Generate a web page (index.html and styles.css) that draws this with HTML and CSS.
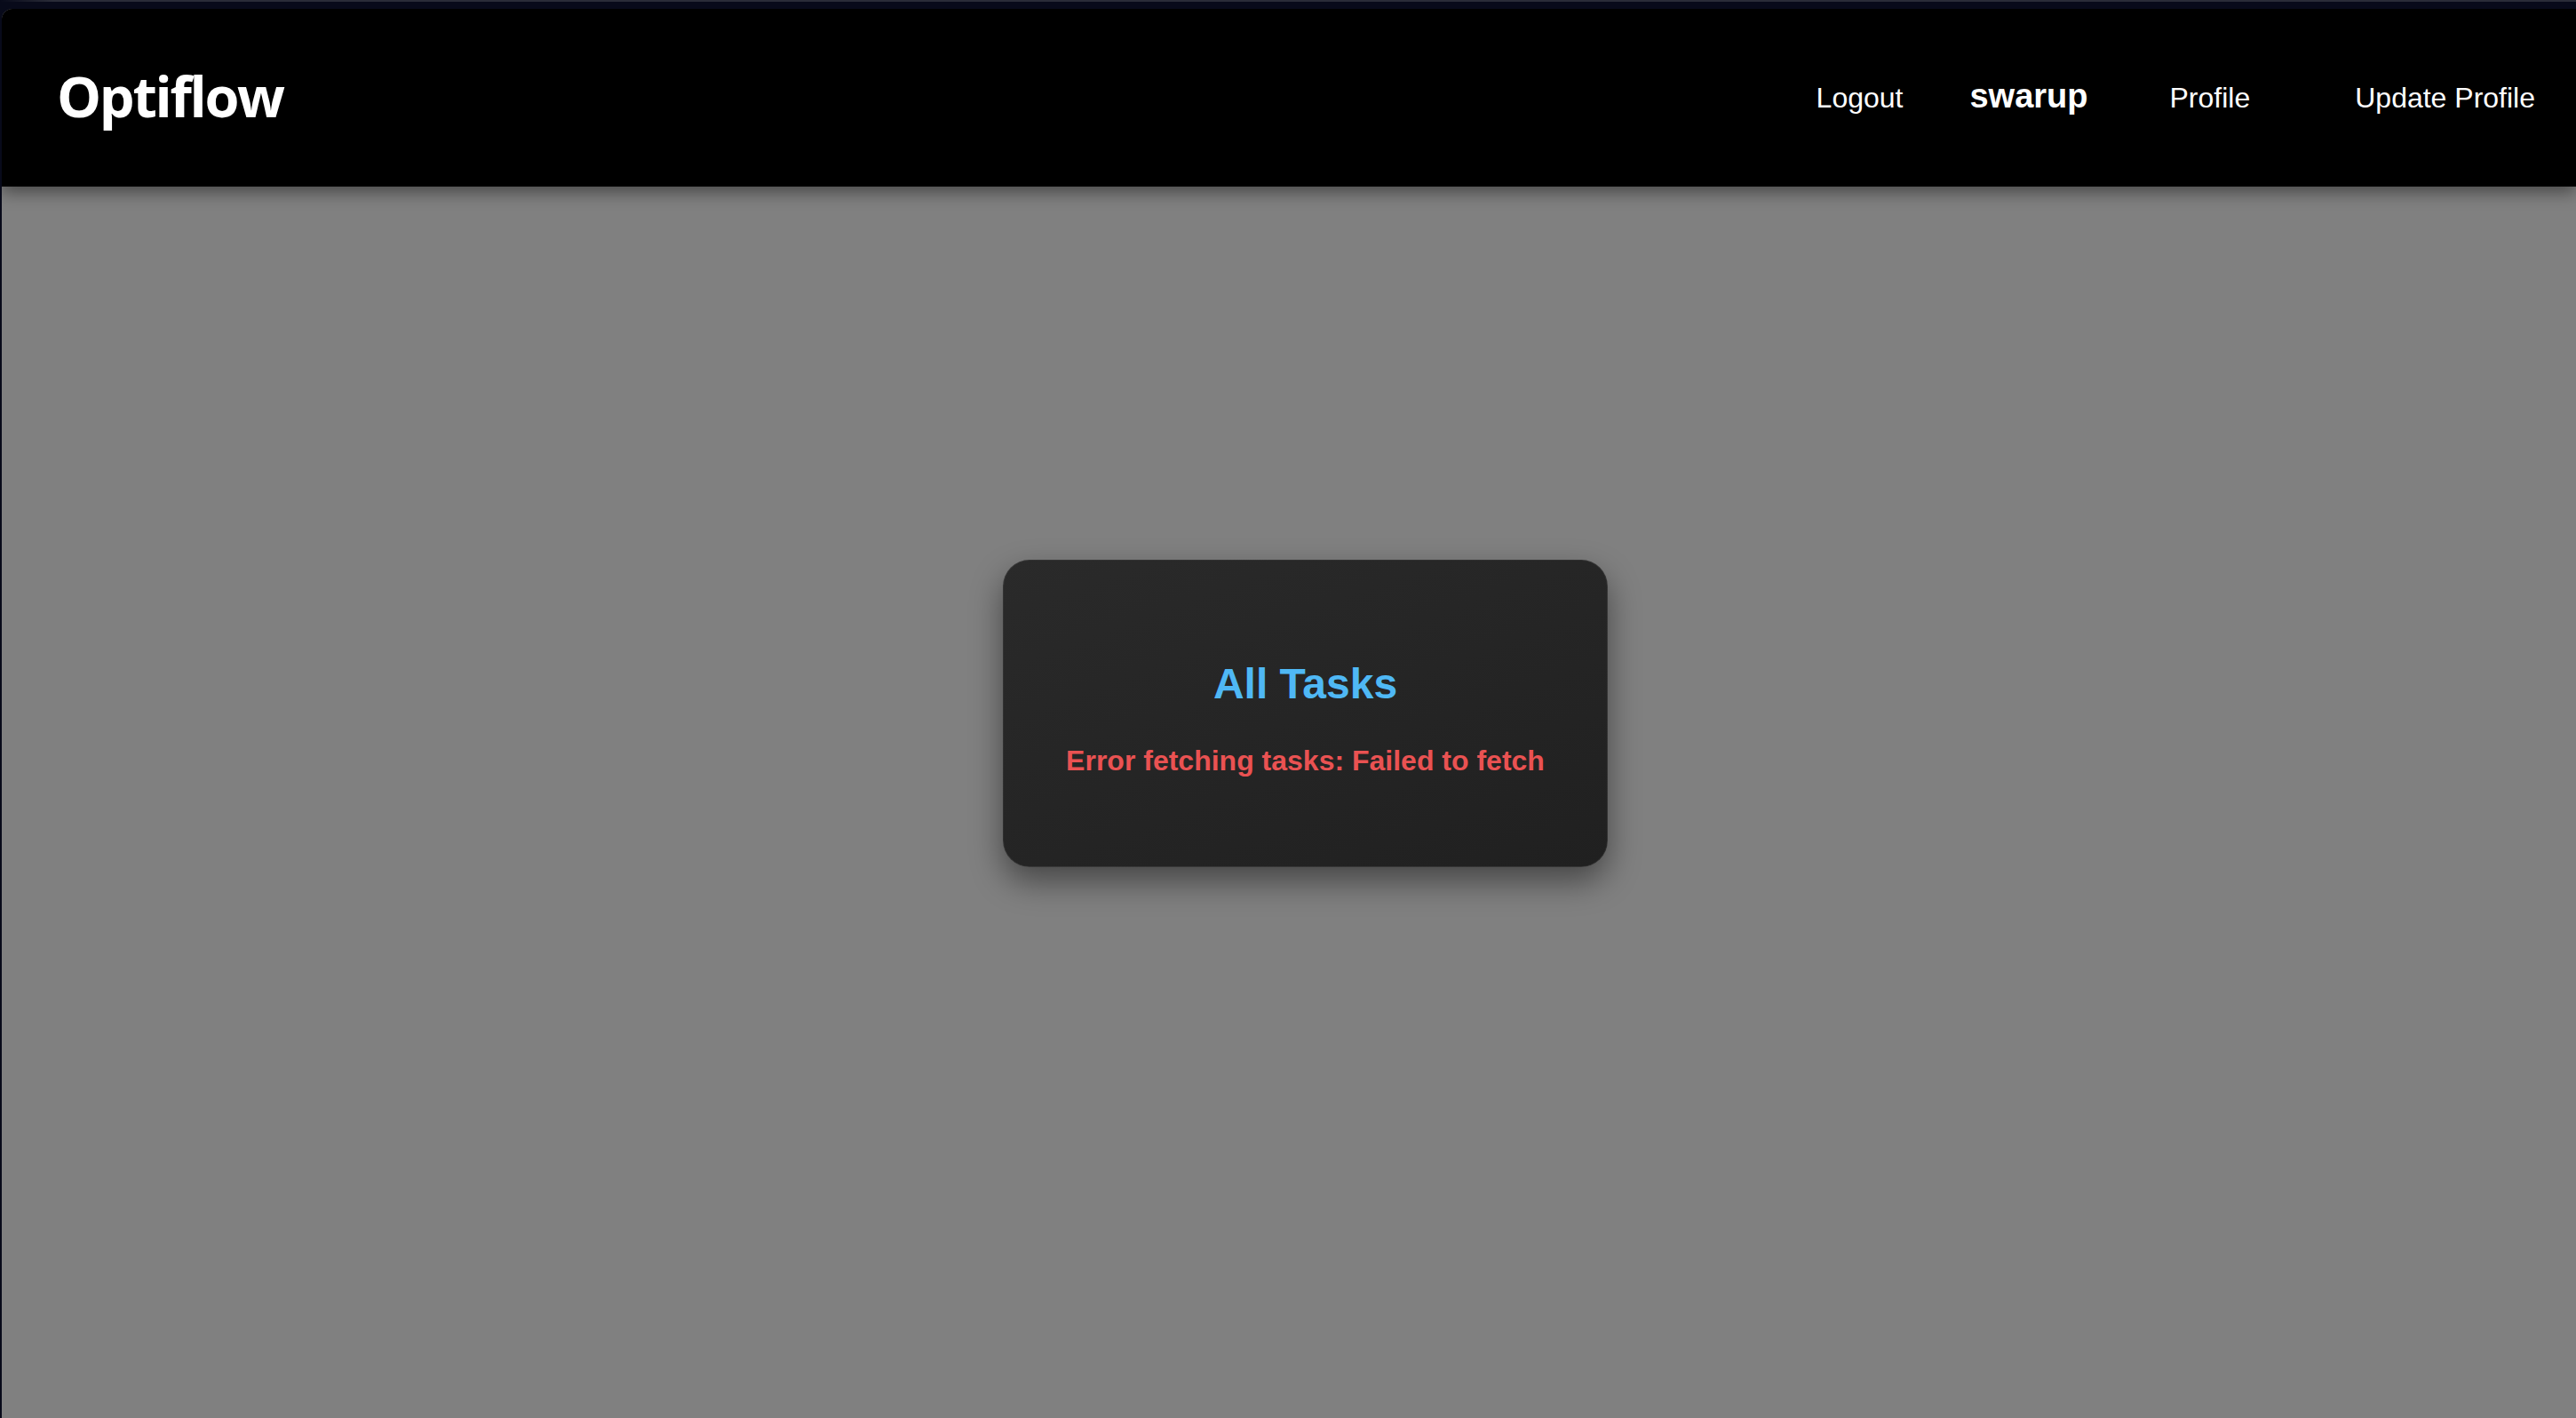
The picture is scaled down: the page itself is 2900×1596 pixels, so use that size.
FILE: index.html
```html
<!DOCTYPE html>
<html lang="en">
<head>
<meta charset="utf-8">
<title>Optiflow</title>
<link rel="stylesheet" href="styles.css">
</head>
<body>
<div class="topline"></div>
<div class="shell">
  <header class="header">
    <div class="logo">Optiflow</div>
    <nav class="nav">
      <a class="nav-link logout">Logout</a>
      <span class="user">swarup</span>
      <a class="nav-link profile">Profile</a>
      <a class="nav-link">Update Profile</a>
    </nav>
  </header>
  <main class="main">
    <section class="card">
      <h2 class="card-title">All Tasks</h2>
      <p class="card-error">Error fetching tasks: Failed to fetch</p>
    </section>
  </main>
</div>
</body>
</html>
```

FILE: styles.css
```css
html, body {
  margin: 0;
  padding: 0;
  height: 100%;
}
body {
  background: #080a1a;
  overflow: hidden;
  font-family: "Liberation Sans", Arial, sans-serif;
}
.topline {
  height: 2px;
  background: linear-gradient(to right, #080a1a, #2a2c38 60px, #2a2c38);
}
.shell {
  margin: 8px 0 0 2px;
  height: calc(100vh - 10px);
  display: flex;
  flex-direction: column;
  border-top-left-radius: 12px;
  overflow: hidden;
  background: #808080;
}
.header {
  position: relative;
  z-index: 2;
  height: 200px;
  flex: none;
  background: #000;
  display: flex;
  align-items: center;
  justify-content: space-between;
  padding: 0 46px 0 62px;
  box-shadow: 0 6px 18px rgba(0, 0, 0, 0.45);
}
.logo {
  font-family: "Open Sans", sans-serif;
  font-weight: 700;
  font-size: 63px;
  letter-spacing: -2.3px;
  color: #fff;
  padding-bottom: 6px;
}
.nav {
  display: flex;
  align-items: baseline;
  color: #fff;
  font-size: 32px;
  padding-bottom: 3px;
}
.nav-link {
  color: #fff;
  text-decoration: none;
}
.logout {
  margin-right: 75px;
}
.user {
  font-weight: 700;
  font-size: 38px;
  margin-right: 92px;
}
.profile {
  margin-right: 118px;
}
.main {
  flex: 1;
  display: flex;
  justify-content: center;
  align-items: flex-start;
  padding: 420px 0 0 37px;
}
.card {
  box-sizing: border-box;
  width: 681px;
  padding: 111px 40px 100px;
  border: 1px solid rgba(255, 255, 255, 0.07);
  border-radius: 30px;
  background: linear-gradient(160deg, #2a2a2a, #202020);
  box-shadow: 0 16px 36px rgba(0, 0, 0, 0.45);
  text-align: center;
}
.card-title {
  margin: 0;
  font-size: 48px;
  font-weight: 700;
  line-height: normal;
  color: #4fb8f5;
}
.card-error {
  margin: 41px 0 0;
  font-size: 32px;
  font-weight: 700;
  line-height: normal;
  color: #ea5252;
}
```
